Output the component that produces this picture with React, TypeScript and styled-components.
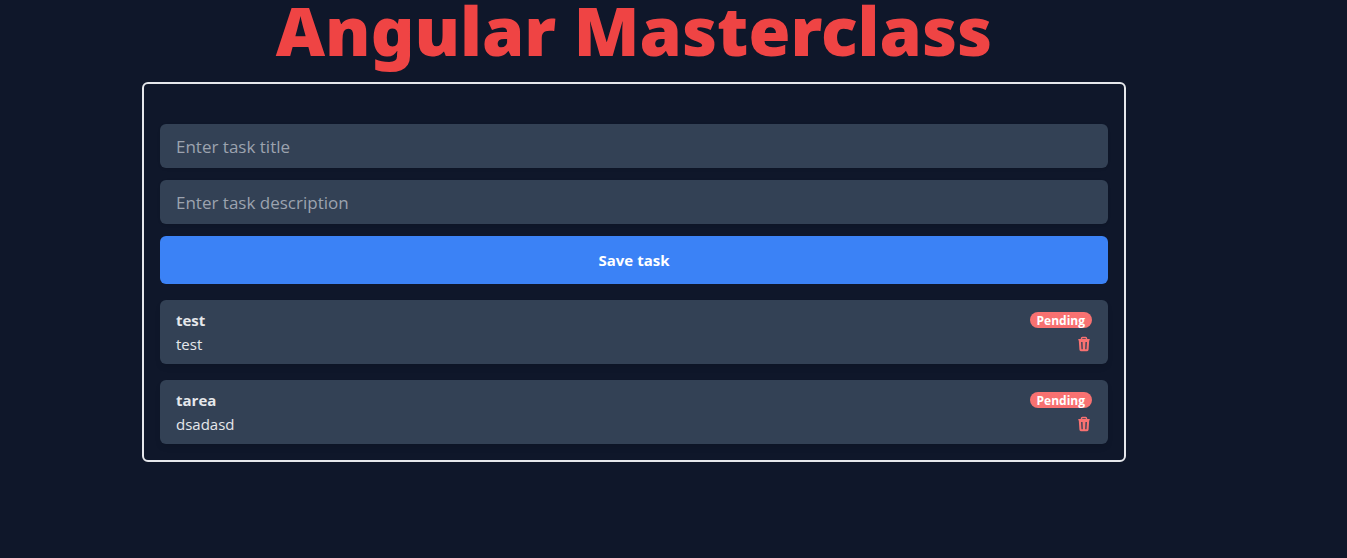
import React, { useState } from "react";
import styled, { createGlobalStyle } from "styled-components";

const GlobalStyle = createGlobalStyle`
  *, *::before, *::after { box-sizing: border-box; }
  body {
    margin: 0;
    background: #0f172a;
    color: #e5e7eb;
    font: 15px/24px "Open Sans", "Noto Sans", sans-serif;
  }
`;

const Page = styled.main`
  display: flex;
  flex-direction: column;
  align-items: center;
  gap: 22px;
  width: 100%;
  max-width: 1268px;
`;

const Title = styled.h1`
  margin: 0;
  color: #ef4444;
  font-family: "Noto Sans", sans-serif;
  font-size: 68px;
  font-weight: 900;
  line-height: 60px;
  text-align: center;
`;

const Card = styled.section`
  width: 100%;
  max-width: 984px;
  padding: 40px 16px 16px;
  border: 2px solid #e5e7eb;
  border-radius: 6px;
`;

const TaskForm = styled.form`
  display: flex;
  flex-direction: column;
  gap: 12px;
`;

const Field = styled.input`
  width: 100%;
  height: 44px;
  padding: 8px 16px;
  border: 0;
  border-radius: 6px;
  background: #334155;
  color: #e5e7eb;
  font: 400 17px/28px "Open Sans", "Noto Sans", sans-serif;
  box-shadow: 0 1px 3px rgba(0, 0, 0, 0.1);
  &::placeholder { color: #9ca3af; opacity: 1; }
`;

const SaveButton = styled.button`
  height: 48px;
  border: 0;
  border-radius: 6px;
  background: #3b82f6;
  color: #fff;
  font: 700 15px/24px "Open Sans", sans-serif;
  cursor: pointer;
`;

const TaskList = styled.ul`
  display: flex;
  flex-direction: column;
  gap: 16px;
  margin: 16px 0 0;
  padding: 0;
  list-style: none;
`;

const TaskItem = styled.li`
  display: flex;
  justify-content: space-between;
  padding: 8px 16px;
  border-radius: 6px;
  background: #334155;
  box-shadow: 0 4px 6px -1px rgba(0, 0, 0, 0.1);
`;

const TaskName = styled.h2`
  margin: 0;
  font-size: 15px;
  font-weight: 700;
`;

const TaskText = styled.p`
  margin: 0;
`;

const TaskSide = styled.div`
  display: flex;
  flex-direction: column;
  align-items: flex-end;
  gap: 8px;
  padding-top: 4px;
`;

const Badge = styled.span`
  padding: 2px 7px 0;
  border-radius: 8px;
  background: #f87171;
  color: #fff;
  font-size: 12px;
  font-weight: 700;
  line-height: 14px;
`;

const DeleteButton = styled.button`
  display: flex;
  padding: 0;
  border: 0;
  background: none;
  color: #f87171;
  cursor: pointer;
`;

const TrashIcon = () => (
  <svg width="16" height="16" viewBox="0 0 16 16" fill="none" aria-hidden="true">
    <path d="M5.5 3.2V2.4Q5.5 1.5 6.4 1.5H9.6Q10.5 1.5 10.5 2.4V3.2" stroke="currentColor" strokeWidth="1.4" />
    <path
      d="M2.8 3H13.2Q13.8 3 13.8 3.7T13.2 4.4H2.8Q2.2 4.4 2.2 3.7T2.8 3ZM2.8 4.4H13.2L12.6 13.6Q12.5 15.2 11.1 15.2H4.9Q3.5 15.2 3.4 13.6ZM5.1 6 5.5 13.3H6.8L6.5 6ZM9.5 6 9.2 13.3H10.5L10.9 6Z"
      fill="currentColor"
      fillRule="evenodd"
    />
  </svg>
);

const initialTasks = [
  { id: 1, title: "test", description: "test" },
  { id: 2, title: "tarea", description: "dsadasd" },
];

export default function App() {
  const [tasks, setTasks] = useState(initialTasks);
  const [title, setTitle] = useState("");
  const [description, setDescription] = useState("");

  const save = (event: React.FormEvent) => {
    event.preventDefault();
    if (!title.trim()) return;
    setTasks([...tasks, { id: Date.now(), title, description }]);
    setTitle("");
    setDescription("");
  };

  return (
    <>
      <GlobalStyle />
      <Page>
        <Title>Angular Masterclass</Title>
        <Card>
          <TaskForm onSubmit={save}>
            <Field
              aria-label="Task title"
              placeholder="Enter task title"
              value={title}
              onChange={(e) => setTitle(e.target.value)}
            />
            <Field
              aria-label="Task description"
              placeholder="Enter task description"
              value={description}
              onChange={(e) => setDescription(e.target.value)}
            />
            <SaveButton type="submit">Save task</SaveButton>
          </TaskForm>
          <TaskList>
            {tasks.map((task) => (
              <TaskItem key={task.id}>
                <div>
                  <TaskName>{task.title}</TaskName>
                  <TaskText>{task.description}</TaskText>
                </div>
                <TaskSide>
                  <Badge>Pending</Badge>
                  <DeleteButton
                    type="button"
                    aria-label={`Delete ${task.title}`}
                    onClick={() => setTasks(tasks.filter((t) => t.id !== task.id))}
                  >
                    <TrashIcon />
                  </DeleteButton>
                </TaskSide>
              </TaskItem>
            ))}
          </TaskList>
        </Card>
      </Page>
    </>
  );
}
